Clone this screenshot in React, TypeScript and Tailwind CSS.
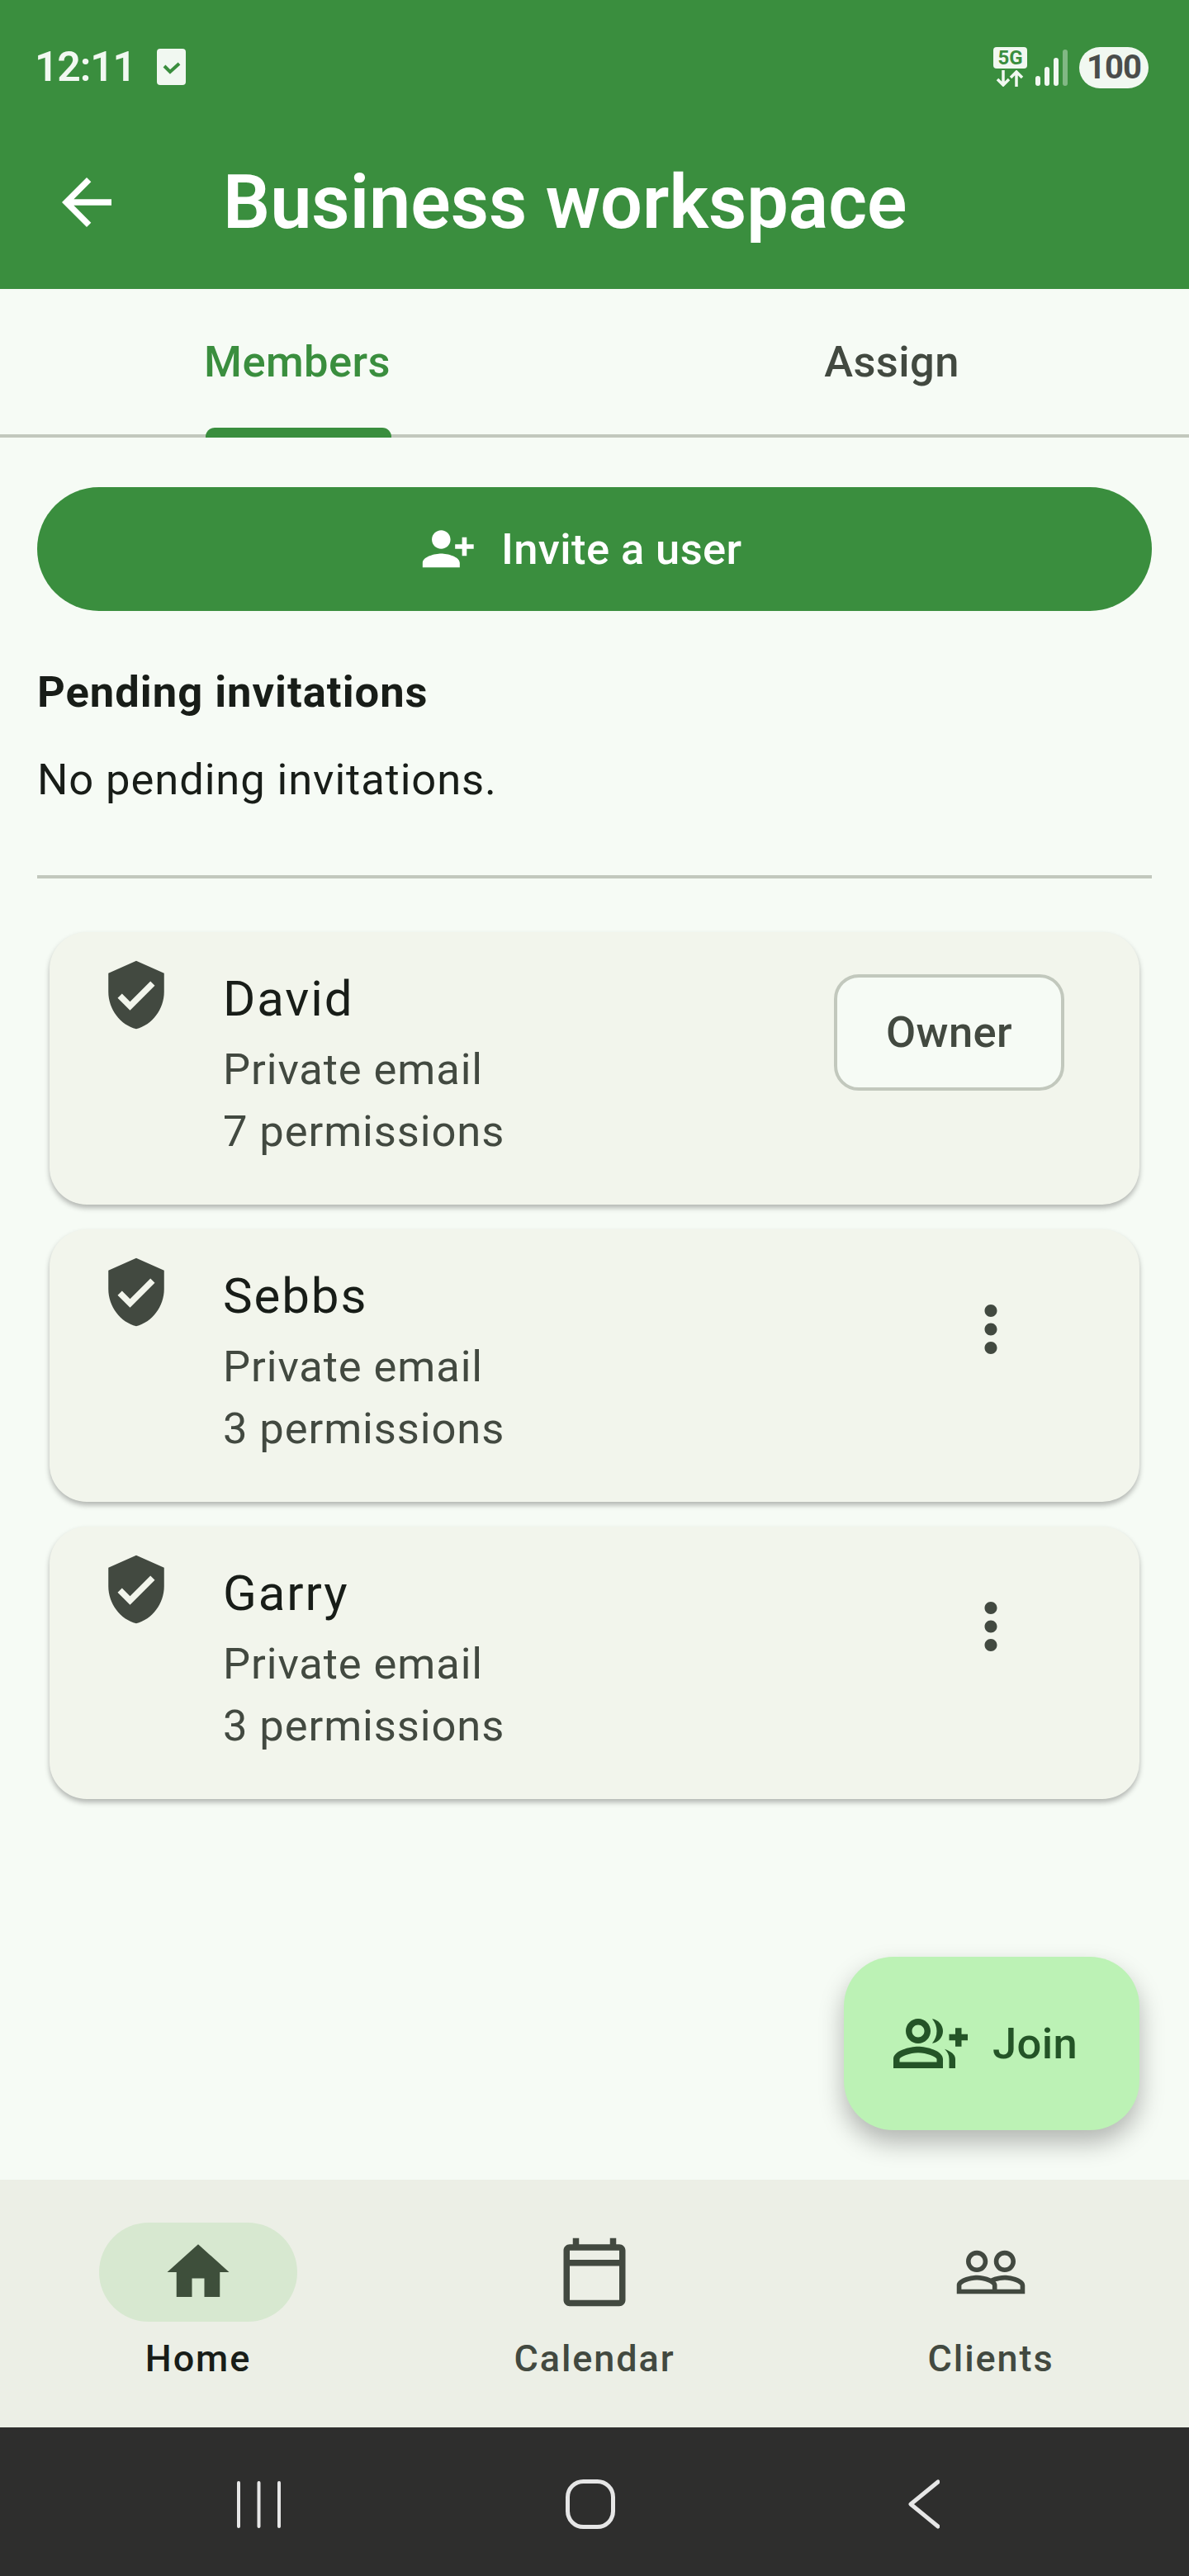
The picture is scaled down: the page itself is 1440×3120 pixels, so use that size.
const GROUP_ADD =
  "M22 9V7h-2v2h-2v2h2v2h2v-2h2V9zM8 12c2.21 0 4-1.79 4-4s-1.79-4-4-4-4 1.79-4 4 1.79 4 4 4zm0-6c1.1 0 2 .9 2 2s-.9 2-2 2-2-.9-2-2 .9-2 2-2zm0 7c-2.67 0-8 1.34-8 4v3h16v-3c0-2.66-5.33-4-8-4zm6 5H2v-.99C2.2 16.29 5.3 15 8 15s5.8 1.29 6 2v1zM12.51 4.05C13.43 5.11 14 6.49 14 8s-.57 2.89-1.49 3.95C14.47 11.7 16 10.04 16 8s-1.53-3.7-3.49-3.95zM16.53 13.83c.89.83 1.47 1.87 1.47 3.17v3h2v-3c0-1.45-1.59-2.51-3.47-3.17z";
const PEOPLE =
  "M16.5 13c-1.2 0-3.07.34-4.5 1-1.43-.67-3.3-1-4.5-1C5.33 13 1 14.08 1 16.25V19h22v-2.75c0-2.17-4.33-3.25-6.5-3.25zm-4 4.5h-10v-1.25c0-.54 2.56-1.75 5-1.75s5 1.21 5 1.75v1.25zm9 0H14v-1.25c0-.46-.2-.86-.52-1.22.88-.3 1.96-.53 3.02-.53 2.44 0 5 1.21 5 1.75v1.25zM7.5 12c1.93 0 3.5-1.57 3.5-3.5S9.43 5 7.5 5 4 6.57 4 8.5 5.57 12 7.5 12zm0-5.5c1.1 0 2 .9 2 2s-.9 2-2 2-2-.9-2-2 .9-2 2-2zm9 5.5c1.93 0 3.5-1.57 3.5-3.5S18.43 5 16.5 5 13 6.57 13 8.5s1.57 3.5 3.5 3.5zm0-5.5c1.1 0 2 .9 2 2s-.9 2-2 2-2-.9-2-2 .9-2 2-2z";

function Icon({ d, className }: { d: string; className: string }) {
  return (
    <svg viewBox="0 0 24 24" fill="currentColor" className={className}>
      <path d={d} />
    </svg>
  );
}

function StatusBar() {
  return (
    <div className="flex h-[160px] items-start justify-between pl-[42px] pr-[49px] text-[#f1f8f1]">
      <div className="flex items-center pt-[50px]">
        <span className="w-[120px] text-[50px] leading-[62px] font-semibold tracking-[-1.2px]">12:11</span>
        <div className="ml-[28px] flex h-[44px] w-[35px] items-center justify-center rounded-[4px] bg-[#f1f8f1]">
          <svg viewBox="0 0 24 24" className="h-[24px] w-[24px]" fill="none" stroke="#3a8e3e" strokeWidth="4">
            <path d="M3 11l7 7 11-10" />
          </svg>
        </div>
      </div>
      <div className="flex items-start pt-[57px]">
        <div className="flex w-[41px] flex-col">
          <div className="flex h-[26px] items-center justify-center rounded-[4px] bg-[#f1f8f1] text-[24px] leading-none font-bold text-[#3a8e3e]">
            5G
          </div>
          <svg viewBox="0 0 41 20" className="mt-[2px] h-[20px] w-[41px]" fill="none" stroke="#f1f8f1" strokeWidth="3.5">
            <path d="M12 0v17M5 11l7 7 7-7M28 20V2M21 9l7-7 7 7" />
          </svg>
        </div>
        <div className="mt-[3px] ml-[10px] flex h-[44px] items-end gap-[5px]">
          <div className="h-[12px] w-[6px] rounded-full bg-[#f1f8f1]" />
          <div className="h-[23px] w-[6px] rounded-full bg-[#f1f8f1]" />
          <div className="h-[34px] w-[6px] rounded-full bg-[#f1f8f1]" />
          <div className="h-[44px] w-[6px] rounded-full bg-[#f1f8f1]/40" />
        </div>
        <div className="ml-[14px] flex h-[50px] w-[84px] items-center justify-center rounded-full bg-[#f1f8f1] text-[40px] font-bold tracking-[-1px] text-[#4a4d4b]">
          100
        </div>
      </div>
    </div>
  );
}

function MemberCard({ name, permissions, owner }: { name: string; permissions: number; owner?: boolean }) {
  return (
    <div className="flex h-[330px] rounded-[45px] bg-[#f2f5ec] pt-[31px] pl-[60px] shadow-[0_4px_6px_rgba(0,0,0,0.28)]">
      <Icon
        d="M12 1L3 5v6c0 5.55 3.84 10.74 9 12 5.16-1.26 9-6.45 9-12V5l-9-4zm-2 16l-4-4 1.41-1.41L10 14.17l6.59-6.59L18 9l-8 8z"
        className="h-[90px] w-[90px] text-[#424940]"
      />
      <div className="ml-[60px] flex-1 pt-[5px]">
        <div className="text-[60px] leading-[90px] tracking-[1.9px] text-[#181d18]">{name}</div>
        <div className="mt-[3px] text-[52.5px] leading-[75px] tracking-[0.9px] text-[#424940]">Private email</div>
        <div className="text-[52.5px] leading-[75px] tracking-[0.9px] text-[#424940]">{permissions} permissions</div>
      </div>
      {owner ? (
        <div className="mt-[20px] mr-[91px] flex h-[141px] w-[279px] items-center justify-center rounded-[30px] border-[4px] border-[#c2c8bd] bg-[#f6fbf5] text-[52.5px] font-medium tracking-[0.4px] text-[#424940]">
          Owner
        </div>
      ) : (
        <Icon
          d="M12 8c1.1 0 2-.9 2-2s-.9-2-2-2-2 .9-2 2 .9 2 2 2zm0 2c-1.1 0-2 .9-2 2s.9 2 2 2 2-.9 2-2-.9-2-2-2zm0 6c-1.1 0-2 .9-2 2s.9 2 2 2 2-.9 2-2-.9-2-2-2z"
          className="mt-[45px] mr-[135px] h-[90px] w-[90px] text-[#424940]"
        />
      )}
    </div>
  );
}

function NavItem({ label, active, children }: { label: string; active?: boolean; children: React.ReactNode }) {
  return (
    <div className="flex flex-1 flex-col items-center pt-[52px]">
      <div className={`flex h-[120px] w-[240px] items-center justify-center rounded-full ${active ? "bg-[#d7e8d0]" : ""}`}>
        {children}
      </div>
      <div
        className={`mt-[15px] text-[45px] leading-[60px] font-medium tracking-[1.9px] ${active ? "text-[#181d18]" : "text-[#424940]"}`}
      >
        {label}
      </div>
    </div>
  );
}

export default function App() {
  return (
    <div className="relative flex h-[3120px] w-[1440px] flex-col overflow-hidden bg-[#f6fbf5] font-['Roboto',sans-serif]">
      <header className="h-[350px] bg-[#3a8e3e] text-white">
        <StatusBar />
        <div className="flex h-[170px] items-center pl-[60px]">
          <Icon d="M20 11H7.83l5.59-5.59L12 4l-8 8 8 8 1.41-1.41L7.83 13H20v-2z" className="h-[90px] w-[90px]" />
          <h1 className="ml-[120px] text-[90px] leading-[105px] font-semibold">Business workspace</h1>
        </div>
      </header>

      <div className="flex h-[180px] border-b-[4px] border-[#c2c8bd]">
        <div className="relative flex flex-1 items-center justify-center text-[52.5px] font-medium tracking-[0.4px] text-[#3a8e3e]">
          Members
          <div className="absolute bottom-[-4px] left-[249px] h-[12px] w-[225px] rounded-t-[11px] bg-[#3a8e3e]" />
        </div>
        <div className="flex flex-1 items-center justify-center text-[52.5px] font-medium tracking-[0.4px] text-[#424940]">
          Assign
        </div>
      </div>

      <main className="flex-1 px-[45px] pt-[60px]">
        <div className="flex h-[150px] items-center justify-center rounded-full bg-[#3a8e3e] pr-[32px] text-white">
          <Icon
            d="M15 12c2.21 0 4-1.79 4-4s-1.79-4-4-4-4 1.79-4 4 1.79 4 4 4zm-9-2V7H4v3H1v2h3v3h2v-3h3v-2H6zm9 4c-2.67 0-8 1.34-8 4v2h16v-2c0-2.66-5.33-4-8-4z"
            className="h-[67.5px] w-[67.5px] -scale-x-100"
          />
          <span className="ml-[30px] text-[52.5px] font-medium tracking-[0.4px]">Invite a user</span>
        </div>
        <h2 className="mt-[61px] text-[52.5px] leading-[75px] font-bold tracking-[1px] text-[#181d18]">
          Pending invitations
        </h2>
        <p className="mt-[31px] text-[52.5px] leading-[75px] tracking-[0.9px] text-[#181d18]">No pending invitations.</p>
        <div className="mt-[78px] h-[4px] bg-[#c2c8bd]" />
        <div className="mt-[65px] flex flex-col gap-[30px] px-[15px]">
          <MemberCard name="David" permissions={7} owner />
          <MemberCard name="Sebbs" permissions={3} />
          <MemberCard name="Garry" permissions={3} />
        </div>
      </main>

      {/* extended fab sits over the page */}
      <div className="absolute top-[2370px] left-[1022px] flex h-[210px] w-[358px] items-center rounded-[60px] bg-[#bcf2b5] pl-[60px] text-[#245427] shadow-[0_15px_30px_rgba(0,0,0,0.28)]">
        <Icon d={GROUP_ADD} className="h-[90px] w-[90px]" />
        <span className="ml-[30px] text-[52.5px] font-medium tracking-[0.4px]">Join</span>
      </div>

      <nav className="flex h-[300px] bg-[#ecefe6]">
        <NavItem label="Home" active>
          <Icon d="M10 20v-6h4v6h5v-8h3L12 3 2 12h3v8z" className="h-[90px] w-[90px] text-[#3e4f3b]" />
        </NavItem>
        <NavItem label="Calendar">
          <Icon
            d="M20 3h-1V1h-2v2H7V1H5v2H4c-1.1 0-2 .9-2 2v16c0 1.1.9 2 2 2h16c1.1 0 2-.9 2-2V5c0-1.1-.9-2-2-2zm0 2v3H4V5h16zM4 21V10h16v11H4z"
            className="h-[90px] w-[90px] text-[#424940]"
          />
        </NavItem>
        <NavItem label="Clients">
          <Icon d={PEOPLE} className="h-[90px] w-[90px] text-[#424940]" />
        </NavItem>
      </nav>

      <div className="flex h-[180px] items-center bg-[#2e2e2d] pt-[6px] pl-[287px] text-[#e6e6e6]">
        <svg viewBox="0 0 53 57" className="h-[57px] w-[53px]" fill="none" stroke="currentColor" strokeWidth="4" strokeLinecap="round">
          <path d="M2 2v53M26.5 2v53M51 2v53" />
        </svg>
        <svg viewBox="0 0 60 60" className="ml-[345px] h-[60px] w-[60px]" fill="none" stroke="currentColor" strokeWidth="5">
          <rect x="2.5" y="2.5" width="55" height="55" rx="19" />
        </svg>
        <svg viewBox="0 0 38 60" className="ml-[355px] h-[60px] w-[38px]" fill="none" stroke="currentColor" strokeWidth="5" strokeLinecap="round" strokeLinejoin="round">
          <path d="M36 3L3 30l33 27" />
        </svg>
      </div>
    </div>
  );
}
